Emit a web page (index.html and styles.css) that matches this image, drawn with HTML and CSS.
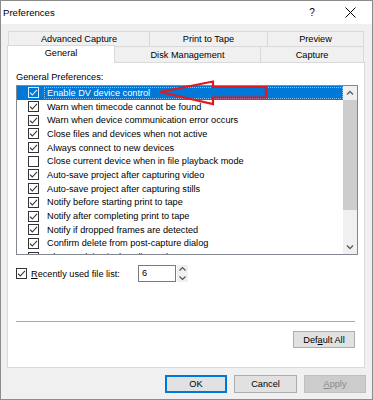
FILE: index.html
```html
<!DOCTYPE html>
<html lang="en">
<head>
    <meta charset="UTF-8">
    <title>Preferences</title>
    <link rel="stylesheet" href="styles.css">
</head>
<body>
    <svg class="defs" width="0" height="0">
        <symbol id="box-on" viewBox="0 0 11 11">
            <rect x="0.5" y="0.5" width="10" height="10" fill="#fff" stroke="#333"/>
            <polyline points="2,5.6 4.3,8 9,2.8" fill="none" stroke="#333" stroke-width="1.1"/>
        </symbol>
        <symbol id="box-off" viewBox="0 0 11 11">
            <rect x="0.5" y="0.5" width="10" height="10" fill="#fff" stroke="#333"/>
        </symbol>
        <symbol id="box-sel" viewBox="0 0 11 11">
            <rect x="0.5" y="0.5" width="10" height="10" fill="none" stroke="#e8eef6"/>
            <polyline points="2,5.6 4.3,8 9,2.8" fill="none" stroke="#e8eef6" stroke-width="1.1"/>
        </symbol>
    </svg>

    <div class="window">
        <div class="titlebar">
            <span class="title">Preferences</span>
            <span class="help">?</span>
            <span class="close">
                <svg width="11" height="11" viewBox="0 0 11 11"><path d="M0.5 0.5 L10.5 10.5 M10.5 0.5 L0.5 10.5" stroke="#000" stroke-width="1"/></svg>
            </span>
        </div>

        <div class="body">
            <div class="tabs">
                <div class="tab-row back">
                    <div class="tab tab-adv">Advanced Capture</div>
                    <div class="tab tab-print">Print to Tape</div>
                    <div class="tab tab-preview">Preview</div>
                </div>
                <div class="tab-row front">
                    <div class="tab active tab-general">General</div>
                    <div class="tab tab-disk">Disk Management</div>
                    <div class="tab tab-capture">Capture</div>
                </div>
            </div>

            <div class="panel">
                <div class="group-label">General Preferences:</div>
                <div class="listbox">
                    <div class="items">
                        <div class="item selected"><svg class="cb"><use href="#box-sel"/></svg><span class="text">Enable DV device control</span></div>
                        <div class="item"><svg class="cb"><use href="#box-on"/></svg><span class="text">Warn when timecode cannot be found</span></div>
                        <div class="item"><svg class="cb"><use href="#box-on"/></svg><span class="text">Warn when device communication error occurs</span></div>
                        <div class="item"><svg class="cb"><use href="#box-on"/></svg><span class="text">Close files and devices when not active</span></div>
                        <div class="item"><svg class="cb"><use href="#box-on"/></svg><span class="text">Always connect to new devices</span></div>
                        <div class="item"><svg class="cb"><use href="#box-off"/></svg><span class="text">Close current device when in file playback mode</span></div>
                        <div class="item"><svg class="cb"><use href="#box-on"/></svg><span class="text">Auto-save project after capturing video</span></div>
                        <div class="item"><svg class="cb"><use href="#box-on"/></svg><span class="text">Auto-save project after capturing stills</span></div>
                        <div class="item"><svg class="cb"><use href="#box-on"/></svg><span class="text">Notify before starting print to tape</span></div>
                        <div class="item"><svg class="cb"><use href="#box-on"/></svg><span class="text">Notify after completing print to tape</span></div>
                        <div class="item"><svg class="cb"><use href="#box-on"/></svg><span class="text">Notify if dropped frames are detected</span></div>
                        <div class="item"><svg class="cb"><use href="#box-on"/></svg><span class="text">Confirm delete from post-capture dialog</span></div>
                        <div class="item"><svg class="cb"><use href="#box-off"/></svg><span class="text">Show tool tips in the Clip Explorer</span></div>
                    </div>
                    <div class="scrollbar">
                        <div class="sb-btn">
                            <svg width="14" height="14" viewBox="0 0 14 14"><polyline points="4,8.5 7,5.5 10,8.5" fill="none" stroke="#606060" stroke-width="1.4"/></svg>
                        </div>
                        <div class="sb-thumb"></div>
                        <div class="sb-track"></div>
                        <div class="sb-btn">
                            <svg width="14" height="14" viewBox="0 0 14 14"><polyline points="4,5.5 7,8.5 10,5.5" fill="none" stroke="#606060" stroke-width="1.4"/></svg>
                        </div>
                    </div>
                </div>

                <div class="recent-row">
                    <svg class="cb"><use href="#box-on"/></svg>
                    <span class="recent-label"><u>R</u>ecently used file list:</span>
                    <div class="spin-input">6</div>
                    <div class="spin">
                        <svg width="11" height="8" viewBox="0 0 11 8"><polyline points="2.5,5.5 5.5,2.5 8.5,5.5" fill="none" stroke="#555" stroke-width="1.2"/></svg>
                        <svg width="11" height="8" viewBox="0 0 11 8"><polyline points="2.5,2.5 5.5,5.5 8.5,2.5" fill="none" stroke="#555" stroke-width="1.2"/></svg>
                    </div>
                </div>

                <div class="separator"></div>
                <div class="panel-actions">
                    <button class="btn">Def<u>a</u>ult All</button>
                </div>
            </div>

            <div class="footer">
                <button class="btn default">OK</button>
                <button class="btn btn-wide">Cancel</button>
                <button class="btn" disabled><u>A</u>pply</button>
            </div>
        </div>

        <!-- red annotation arrow drawn over the list -->
        <svg class="annotation" width="373" height="400" viewBox="0 0 373 400">
            <polygon points="160,92 213,81.5 213,87 266,87 266,97.5 213,97.5 213,104" fill="none" stroke="#e3171f" stroke-width="2.2"/>
        </svg>
    </div>
</body>
</html>
```

FILE: styles.css
```css
* {
    box-sizing: border-box;
}
body {
    margin: 0;
    font-family: "Liberation Sans", Arial, sans-serif;
    font-size: 9.2px;
    color: #000;
    background: #fff;
}
.defs {
    position: absolute;
}
.window {
    position: relative;
    width: 373px;
    height: 400px;
    border: 1px solid #8c8c8c;
    background: #f0f0f0;
    display: flex;
    flex-direction: column;
}

/* title bar */
.titlebar {
    flex: none;
    height: 23px;
    background: #fff;
    display: flex;
    align-items: center;
    padding-left: 2px;
}
.title {
    flex: 1;
    font-size: 9.6px;
}
.help {
    width: 16px;
    margin-right: 8px;
    text-align: center;
    font-size: 10px;
}
.close {
    width: 44px;
    height: 23px;
    display: flex;
    align-items: center;
    justify-content: center;
}

/* body */
.body {
    flex: 1;
    padding: 7px 7px 0 6px;
    display: flex;
    flex-direction: column;
}
.tabs {
    height: 31px;
    flex: none;
}
.tab-row {
    display: flex;
}
.tab-row.back {
    height: 15px;
    margin-left: 1px;
}
.tab-row.front {
    height: 16px;
    align-items: flex-start;
}
.tab {
    height: 100%;
    display: flex;
    align-items: center;
    justify-content: center;
    border: 1px solid #d9d9d9;
    border-bottom: none;
    background: #f0f0f0;
    margin-left: -1px;
}
.tab:first-child {
    margin-left: 0;
}
.tab.active {
    position: relative;
    z-index: 2;
    height: 18px;
    margin-top: -1px;
    padding-bottom: 4px;
    background: #fff;
}
.tab-adv { width: 142px; }
.tab-print { width: 119px; }
.tab-preview { width: 97px; }
.tab-general { width: 108px; }
.tab-disk { width: 147px; }
.tab-capture { width: 104px; }

/* panel */
.panel {
    width: 358px;
    height: 306px;
    flex: none;
    background: #fff;
    border: 1px solid #d9d9d9;
    padding-left: 8px;
    display: flex;
    flex-direction: column;
}
.group-label {
    margin-top: 8px;
    height: 13px;
    line-height: 13px;
}
.listbox {
    margin-top: 1px;
    width: 342px;
    height: 170px;
    border: 1px solid #828790;
    display: flex;
    overflow: hidden;
}
.items {
    flex: 1;
    overflow: hidden;
}
.item {
    height: 13.7px;
    display: flex;
    align-items: center;
    padding-left: 11px;
    white-space: nowrap;
}
.cb {
    width: 11px;
    height: 11px;
    flex: none;
}
.item .text {
    flex: 1;
    margin-left: 5px;
    padding-left: 3px;
    line-height: 12px;
}
.item.selected {
    background: #0078d7;
    color: #fff;
}
.item.selected .text {
    outline: 1px dotted rgba(255, 255, 255, 0.55);
    outline-offset: -1px;
}
.scrollbar {
    width: 14px;
    flex: none;
    display: flex;
    flex-direction: column;
    background: #f0f0f0;
}
.sb-btn {
    height: 14px;
    flex: none;
}
.sb-btn svg {
    display: block;
}
.sb-thumb {
    height: 110px;
    flex: none;
    background: #cdcdcd;
}
.sb-track {
    flex: 1;
}

/* recently used */
.recent-row {
    margin-top: 10px;
    height: 17px;
    display: flex;
    align-items: center;
}
.recent-label {
    width: 107px;
    margin-left: 4px;
}
.spin-input {
    width: 38px;
    height: 17px;
    border: 1px solid #7a7a7a;
    padding-left: 3px;
    line-height: 15px;
}
.spin {
    width: 11px;
    height: 17px;
    margin-left: 1px;
    display: flex;
    flex-direction: column;
    justify-content: space-between;
    background: #f0f0f0;
}
.spin svg {
    display: block;
}

.separator {
    margin-top: 39px;
    width: 339px;
    height: 1px;
    background: #a9a9a9;
}
.panel-actions {
    width: 339px;
    margin-top: 9px;
    display: flex;
    justify-content: flex-end;
}

/* buttons */
.btn {
    width: 62px;
    height: 17px;
    padding: 0;
    font-family: inherit;
    font-size: 9.2px;
    color: #000;
    background: #e1e1e1;
    border: 1px solid #adadad;
}
.btn-wide {
    width: 63px;
}
.btn.default {
    border: 2px solid #0078d7;
}
.btn:disabled {
    background: #cccccc;
    border-color: #bfbfbf;
    color: #8a8a8a;
}
.footer {
    margin-top: 7px;
    margin-right: -1px;
    display: flex;
    justify-content: flex-end;
    gap: 7px;
}
.footer .btn {
    height: 18px;
}

.annotation {
    position: absolute;
    left: -1px;
    top: -1px;
    pointer-events: none;
}
```
